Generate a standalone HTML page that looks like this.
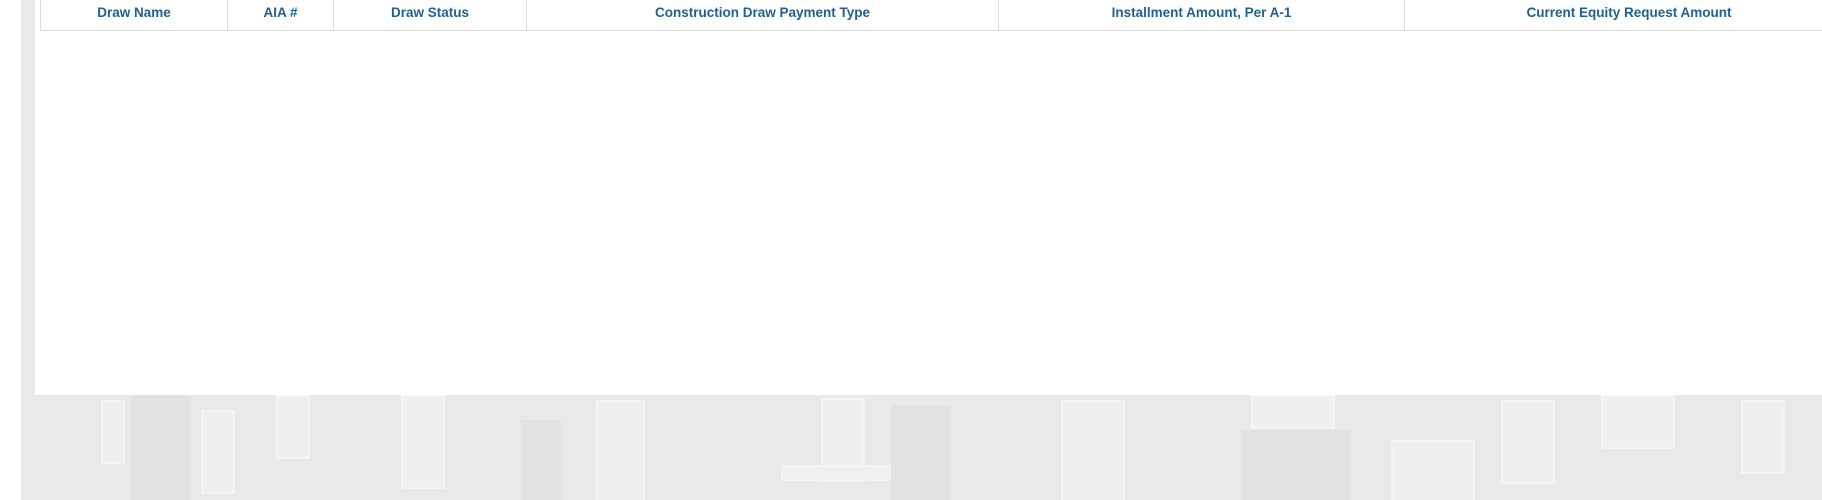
<!DOCTYPE html>
<html><head><style>
html,body{margin:0;padding:0;width:1822px;height:500px;overflow:hidden;background:#fff;position:relative;font-family:"Liberation Sans",Arial,sans-serif}
.bg{position:absolute;left:21px;top:0;width:1801px;height:500px;background:#e9e9e9;overflow:hidden}
.w{position:absolute;background:#efefef;border:2px solid #f4f4f4}
.d{position:absolute;background:#e2e2e2}
.panel{position:absolute;left:35px;top:0;width:1787px;height:395px;background:#fff}
.hdr{position:absolute;left:40px;top:0;height:30px;width:1812px;border-bottom:1px solid #dcdcdc;border-left:1px solid #dcdcdc;display:flex}
.hdr div{height:30px;line-height:26px;text-align:center;font-weight:bold;font-size:13.5px;color:#235f91;border-right:1px solid #dcdcdc;box-sizing:border-box;white-space:nowrap}
</style></head><body>
<div class="bg">
<div class="d" style="left:110px;top:395px;width:60px;height:105px"></div>
<div class="w" style="left:80px;top:400px;width:20px;height:60px"></div>
<div class="w" style="left:180px;top:410px;width:30px;height:80px"></div>
<div class="w" style="left:255px;top:395px;width:30px;height:60px"></div>
<div class="w" style="left:380px;top:395px;width:40px;height:90px"></div>
<div class="d" style="left:500px;top:420px;width:40px;height:80px"></div>
<div class="w" style="left:575px;top:400px;width:45px;height:100px"></div>
<div class="w" style="left:800px;top:398px;width:40px;height:80px"></div>
<div class="w" style="left:760px;top:465px;width:150px;height:12px"></div>
<div class="d" style="left:870px;top:405px;width:60px;height:95px"></div>
<div class="w" style="left:1040px;top:400px;width:60px;height:100px"></div>
<div class="w" style="left:1230px;top:395px;width:80px;height:30px"></div>
<div class="d" style="left:1220px;top:430px;width:110px;height:70px"></div>
<div class="w" style="left:1370px;top:440px;width:80px;height:60px"></div>
<div class="w" style="left:1480px;top:400px;width:50px;height:80px"></div>
<div class="w" style="left:1580px;top:395px;width:70px;height:50px"></div>
<div class="w" style="left:1720px;top:400px;width:40px;height:70px"></div>
</div>
<div class="panel"></div>
<div class="hdr">
<div style="width:187px">Draw Name</div>
<div style="width:106px">AIA #</div>
<div style="width:193px">Draw Status</div>
<div style="width:472px">Construction Draw Payment Type</div>
<div style="width:406px">Installment Amount, Per A-1</div>
<div style="width:448px;border-right:none">Current Equity Request Amount</div>
</div>
</body></html>
